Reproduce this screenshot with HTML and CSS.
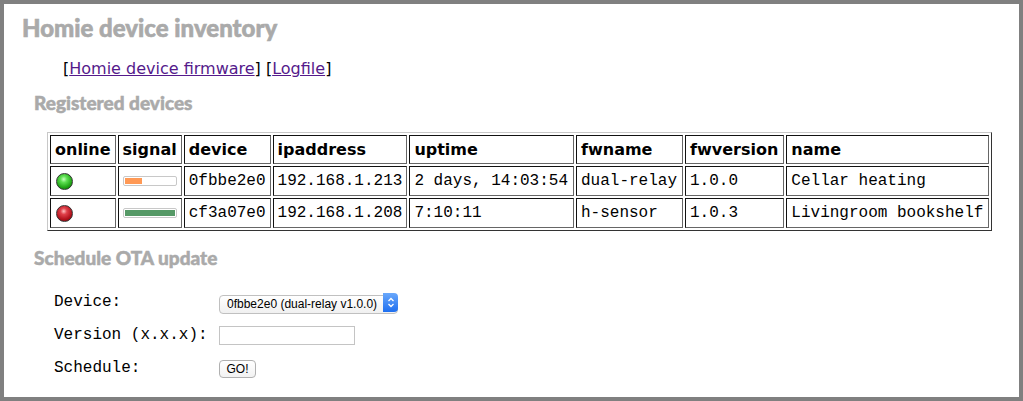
FILE: index.html
```html
<!DOCTYPE html>
<html>
<head>
<meta charset="utf-8">
<title>Homie device inventory</title>
<link rel="stylesheet" href="styles.css">
</head>
<body>
<div class="page">
  <h1 class="title">Homie device inventory</h1>
  <p class="links">[<a href="#">Homie device firmware</a>] [<a href="#">Logfile</a>]</p>
  <h2 class="section">Registered devices</h2>
  <table class="devices">
    <thead>
      <tr><th>online</th><th>signal</th><th>device</th><th>ipaddress</th><th>uptime</th><th>fwname</th><th>fwversion</th><th>name</th></tr>
    </thead>
    <tbody>
      <tr>
        <td><span class="led led-on"></span></td>
        <td><span class="bar"><span class="fill fill-low" style="width:34%"></span></span></td>
        <td>0fbbe2e0</td><td>192.168.1.213</td><td>2 days, 14:03:54</td><td>dual-relay</td><td>1.0.0</td><td>Cellar heating</td>
      </tr>
      <tr>
        <td><span class="led led-off"></span></td>
        <td><span class="bar"><span class="fill fill-high" style="width:100%"></span></span></td>
        <td>cf3a07e0</td><td>192.168.1.208</td><td>7:10:11</td><td>h-sensor</td><td>1.0.3</td><td>Livingroom bookshelf</td>
      </tr>
    </tbody>
  </table>
  <h2 class="section section-ota">Schedule OTA update</h2>
  <form class="ota">
    <label class="lbl">Device:</label>
    <div class="select-wrap">
      <select class="select"><option>0fbbe2e0 (dual-relay v1.0.0)</option><option>cf3a07e0 (h-sensor v1.0.3)</option></select>
      <span class="select-arrow"><svg width="8" height="11" viewBox="0 0 8 11"><path d="M1.5 4 L4 1.5 L6.5 4 M1.5 7 L4 9.5 L6.5 7" fill="none" stroke="#fff" stroke-width="1.3"/></svg></span>
    </div>
    <label class="lbl">Version (x.x.x):</label>
    <div><input class="text" type="text"></div>
    <label class="lbl">Schedule:</label>
    <div><button class="go" type="button">GO!</button></div>
  </form>
</div>
</body>
</html>
```
FILE: styles.css
```css
html { background: #808080; height: 100%; }
body {
  margin: 4px;
  background: #fff;
  height: 393px;
  box-sizing: border-box;
  overflow: hidden;
}
.page {
  padding: 11px 0 0 18px;
  font-family: "DejaVu Sans", Verdana, sans-serif;
}
.title {
  margin: 0;
  font-family: Lato, "Open Sans", sans-serif;
  font-weight: 900;
  font-size: 24px;
  line-height: 26px;
  color: #aaaaaa;
  -webkit-text-stroke: 0.6px #aaaaaa;
}
.links {
  margin: 18px 0 0 41px;
  font-size: 16px;
  line-height: 20px;
  color: #000;
}
.links a { color: #551a8b; }
.section {
  margin: 13px 0 0 12px;
  font-family: Lato, "Open Sans", sans-serif;
  font-weight: 900;
  font-size: 19px;
  line-height: 22px;
  color: #aaaaaa;
  -webkit-text-stroke: 0.5px #aaaaaa;
}
.devices {
  margin: 18px 0 0 25px;
  border-collapse: separate;
  border-spacing: 2px;
  border: 1px solid;
  border-color: #c8c8c8 #333 #333 #c8c8c8;
}
.devices th, .devices td {
  border: 1px solid;
  border-color: #111 #666 #666 #111;
  text-align: left;
  white-space: nowrap;
}
.devices th {
  padding: 4px 4px;
  font-family: "DejaVu Sans", Verdana, sans-serif;
  font-weight: bold;
  font-size: 16px;
  line-height: 19px;
}
.devices td {
  padding: 5px 4px;
  font-family: "Liberation Mono", "Courier New", monospace;
  font-size: 16px;
  line-height: 18px;
  height: 18px;
}
.devices th:nth-child(n+5), .devices td:nth-child(n+5) { padding-right: 5px; }
.led {
  display: block;
  margin-left: 1px;
  width: 15px;
  height: 15px;
  border-radius: 50%;
  border: 1px solid #333;
}
.led-on { background: radial-gradient(circle at 45% 35%, #c8ffc0 0, #5ee052 25%, #1fa314 65%, #0d6a08 100%); }
.led-off { background: radial-gradient(circle at 45% 35%, #ffc0c0 0, #e0404a 25%, #b0101a 65%, #6a0508 100%); }
.bar {
  display: block;
  width: 50px;
  height: 6px;
  padding: 1px;
  border: 1px solid #c8c8c8;
  border-radius: 2px;
  background: #fff;
}
.fill { display: block; height: 100%; }
.fill-low { background: #ff9955; }
.fill-high { background: #559966; }
.section-ota { margin-top: 16px; }
.ota {
  margin: 24px 0 0 32px;
  display: grid;
  grid-template-columns: 165px auto;
  row-gap: 14px;
  align-items: center;
}
.lbl {
  font-family: "Liberation Mono", "Courier New", monospace;
  font-size: 16px;
  line-height: 19px;
}
.select-wrap {
  position: relative;
  width: 179px;
  height: 19px;
}
.select {
  appearance: none;
  -webkit-appearance: none;
  width: 179px;
  height: 19px;
  margin: 0;
  padding: 0 0 0 7px;
  border: 1px solid #c0c0c0;
  border-radius: 4px;
  background: linear-gradient(#fff, #f0f0f0);
  font-family: "Liberation Sans", Helvetica, Arial, sans-serif;
  font-size: 12px;
  color: #000;
}
.select-arrow {
  position: absolute;
  right: 0;
  top: 0;
  width: 15px;
  height: 19px;
  border-radius: 0 4px 4px 0;
  background: linear-gradient(#6aa8fb, #1e6ff0);
  display: flex;
  align-items: center;
  justify-content: center;
}
.text {
  display: block;
  width: 136px;
  height: 19px;
  margin: 0;
  box-sizing: border-box;
  border: 1px solid #c4c4c4;
  padding: 0 2px;
}
.go {
  display: block;
  width: 37px;
  height: 18px;
  margin: 0;
  padding: 0;
  border: 1px solid #b0b0b0;
  border-radius: 4px;
  background: linear-gradient(#fff, #f2f2f2);
  font-family: "Liberation Sans", Helvetica, Arial, sans-serif;
  font-size: 12px;
  color: #000;
}
```
